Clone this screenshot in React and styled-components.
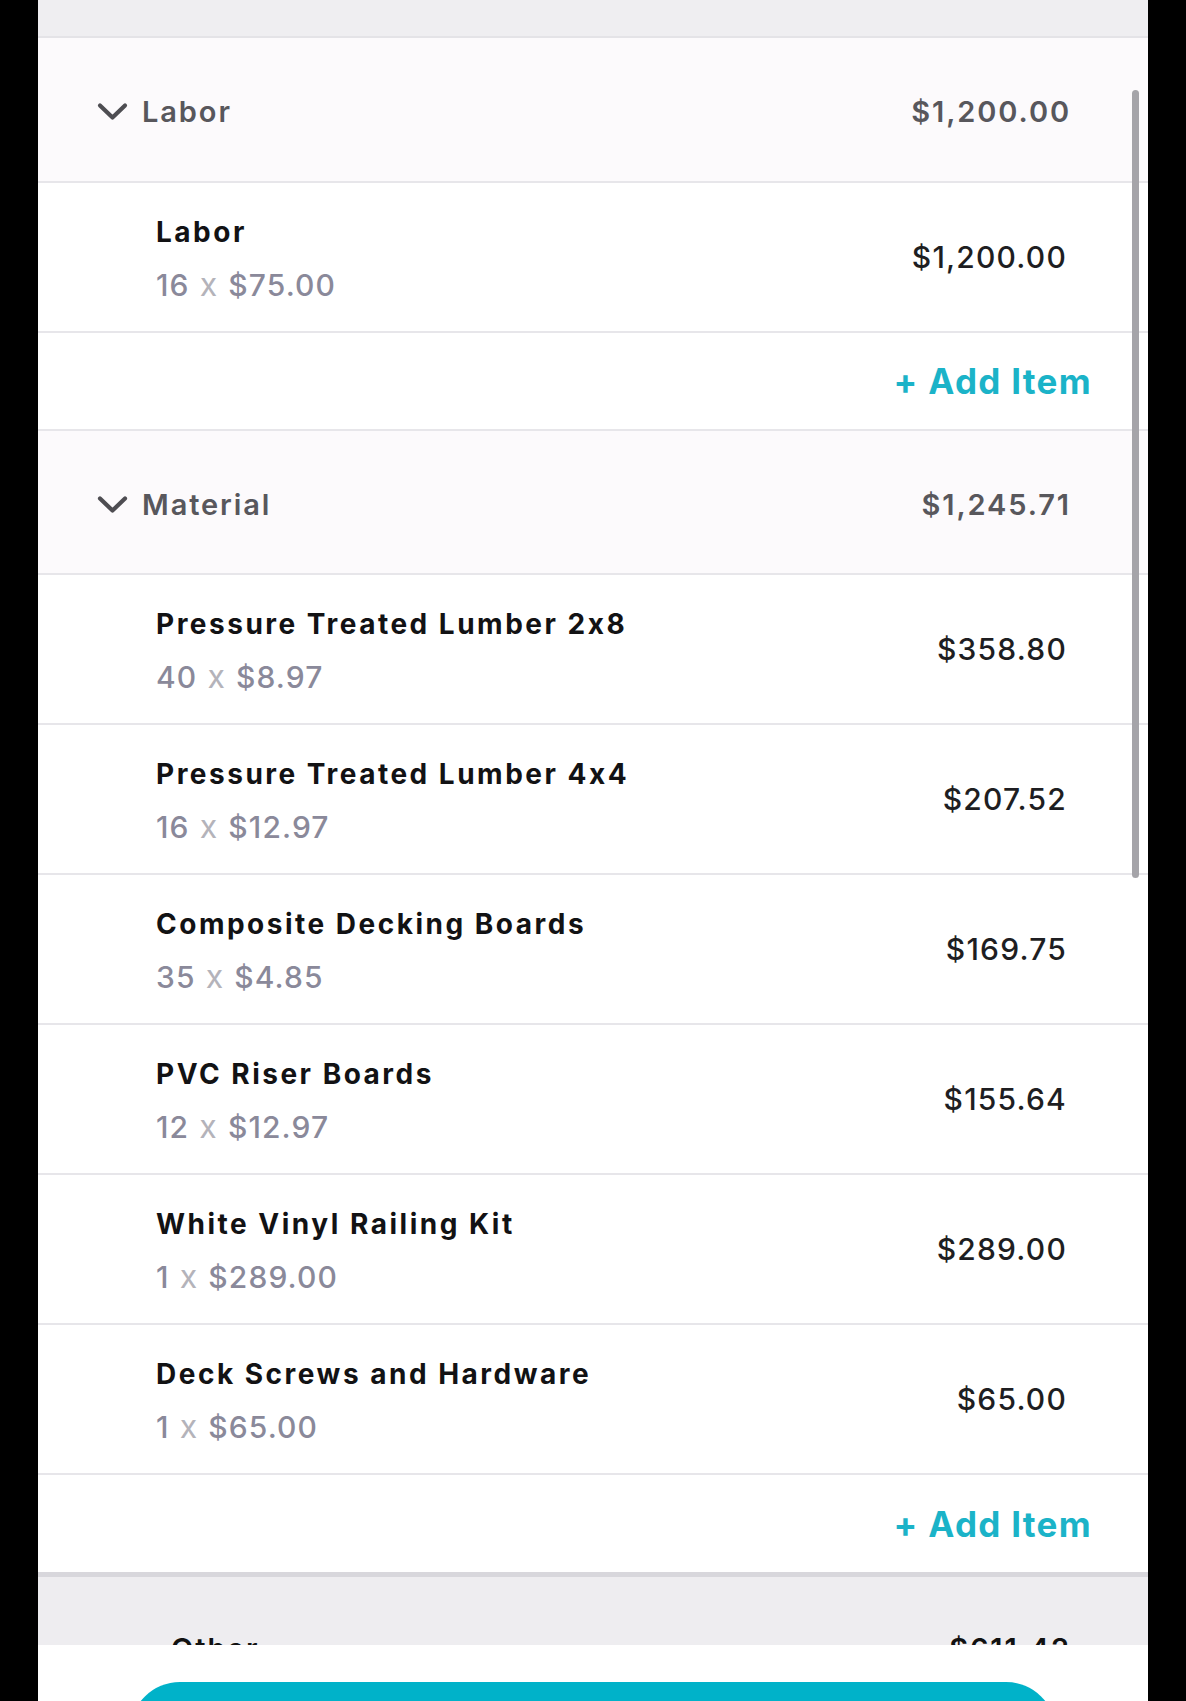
import React from "react";
import styled, { createGlobalStyle } from "styled-components";

const GlobalStyle = createGlobalStyle`
  html, body { margin: 0; padding: 0; background: #000; }
  body { font-family: Inter, "Open Sans", "Liberation Sans", sans-serif; }
  * { box-sizing: border-box; }
`;

const Screen = styled.div`
  position: relative;
  width: 1110px;
  height: 1701px;
  margin: 0 auto;
  background: #fff;
  display: flex;
  flex-direction: column;
  overflow: hidden;
`;

const TopBand = styled.div`
  flex: none;
  height: 38px;
  background: #efeef1;
  border-bottom: 2px solid #e4e3e7;
`;

const ScrollArea = styled.div`
  flex: 1;
  min-height: 0;
  overflow: hidden;
`;

const CategoryHeader = styled.div`
  height: ${(p) => p.$h || 145}px;
  display: flex;
  align-items: center;
  padding: ${(p) => (p.$muted ? 0 : 4)}px 77px 0 ${(p) => p.$indent || 59}px;
  background: ${(p) => (p.$muted ? "#eeedf0" : "#fcfafc")};
  border-bottom: 2px solid #e7e6ea;
`;

const Chevron = styled.svg`
  width: 31px;
  height: 19px;
  margin-right: 14px;
  flex: none;
`;

const HeaderLabel = styled.span`
  flex: 1;
  font-size: 29px;
  font-weight: 600;
  color: ${(p) => (p.$dark ? "#111" : "#58575c")};
  letter-spacing: 1.9px;
`;

const HeaderAmount = styled.span`
  font-size: 29px;
  font-weight: 600;
  color: ${(p) => (p.$dark ? "#111" : "#58575c")};
  letter-spacing: 1.9px;
`;

const ItemRow = styled.div`
  height: ${(p) => p.$h || 150}px;
  display: flex;
  align-items: center;
  padding: 0 81px 0 118px;
  background: #fff;
  border-bottom: 2px solid #e7e6ea;
`;

const ItemText = styled.div`
  flex: 1;
  display: flex;
  flex-direction: column;
  gap: 18px;
  padding-top: 4px;
`;

const ItemTitle = styled.div`
  font-size: 28px;
  line-height: 34px;
  font-weight: 700;
  color: #121214;
  letter-spacing: 2.5px;
`;

const ItemQty = styled.div`
  font-size: 30px;
  line-height: 36px;
  font-weight: 500;
  color: #8a899a;
  letter-spacing: 1.1px;
`;

const Times = styled.span`
  color: #b4b3ba;
  font-weight: 400;
  font-size: 32px;
  margin: 0 1px;
`;

const ItemPrice = styled.div`
  font-size: 30px;
  font-weight: 500;
  color: #1e1e22;
  letter-spacing: 1.2px;
`;

const AddRow = styled.div`
  height: ${(p) => p.$h || 98}px;
  display: flex;
  align-items: center;
  justify-content: flex-end;
  padding: 0 56px 0 0;
  background: #fff;
  border-bottom: ${(p) => (p.$last ? "5px solid #d8d7dc" : "2px solid #e7e6ea")};
`;

const AddButton = styled.span`
  font-size: 35px;
  font-weight: 700;
  color: #1bb3c8;
  letter-spacing: 1.3px;
`;

const ScrollThumb = styled.div`
  position: absolute;
  top: 90px;
  right: 9px;
  width: 7px;
  height: 788px;
  border-radius: 4px;
  background: #a5a4a9;
`;

const Footer = styled.div`
  flex: none;
  height: 56px;
  background: #fff;
  padding-top: 37px;
  display: flex;
  justify-content: center;
`;

const PrimaryButton = styled.div`
  width: 926px;
  height: 100px;
  flex: none;
  border-radius: 50px;
  background: #00b2c9;
`;

const ChevronDown = () => (
  <Chevron viewBox="0 0 31 19">
    <polyline
      points="3,3.5 15.5,15.5 28,3.5"
      fill="none"
      stroke="#4e4d52"
      strokeWidth="4.2"
      strokeLinecap="round"
      strokeLinejoin="round"
    />
  </Chevron>
);

const materials = [
  { name: "Pressure Treated Lumber 2x8", qty: "40", unit: "$8.97", total: "$358.80" },
  { name: "Pressure Treated Lumber 4x4", qty: "16", unit: "$12.97", total: "$207.52" },
  { name: "Composite Decking Boards", qty: "35", unit: "$4.85", total: "$169.75" },
  { name: "PVC Riser Boards", qty: "12", unit: "$12.97", total: "$155.64" },
  { name: "White Vinyl Railing Kit", qty: "1", unit: "$289.00", total: "$289.00" },
  { name: "Deck Screws and Hardware", qty: "1", unit: "$65.00", total: "$65.00" },
];

const Item = ({ name, qty, unit, total, h }) => (
  <ItemRow $h={h}>
    <ItemText>
      <ItemTitle>{name}</ItemTitle>
      <ItemQty>
        {qty} <Times>x</Times> {unit}
      </ItemQty>
    </ItemText>
    <ItemPrice>{total}</ItemPrice>
  </ItemRow>
);

export default function App() {
  return (
    <>
      <GlobalStyle />
      <Screen>
        <TopBand />
        <ScrollArea>
          <CategoryHeader>
            <ChevronDown />
            <HeaderLabel>Labor</HeaderLabel>
            <HeaderAmount>$1,200.00</HeaderAmount>
          </CategoryHeader>
          <Item name="Labor" qty="16" unit="$75.00" total="$1,200.00" />
          <AddRow>
            <AddButton>+ Add Item</AddButton>
          </AddRow>
          <CategoryHeader $h={144}>
            <ChevronDown />
            <HeaderLabel>Material</HeaderLabel>
            <HeaderAmount>$1,245.71</HeaderAmount>
          </CategoryHeader>
          {materials.map((m) => (
            <Item key={m.name} {...m} />
          ))}
          <AddRow $last $h={102}>
            <AddButton>+ Add Item</AddButton>
          </AddRow>
          <CategoryHeader $muted $indent={133}>
            <HeaderLabel $dark>Other</HeaderLabel>
            <HeaderAmount $dark>$611.42</HeaderAmount>
          </CategoryHeader>
        </ScrollArea>
        <Footer>
          <PrimaryButton />
        </Footer>
        <ScrollThumb />
      </Screen>
    </>
  );
}
